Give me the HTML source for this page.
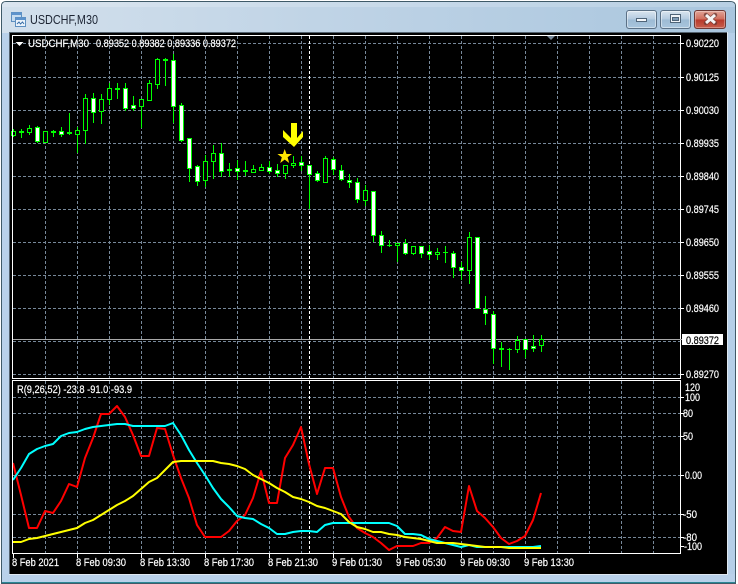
<!DOCTYPE html>
<html><head><meta charset="utf-8"><title>USDCHF,M30</title>
<style>
html,body{margin:0;padding:0;background:#fff;width:738px;height:584px;overflow:hidden}
svg{display:block}
text{font-family:"Liberation Sans",sans-serif;font-size:11px;fill:#fff;stroke:#fff;stroke-width:.2}
.c{shape-rendering:crispEdges}
</style></head><body>
<svg width="738" height="584" viewBox="0 0 738 584" xmlns="http://www.w3.org/2000/svg">
<defs>
<linearGradient id="h" x1="0" x2="1" y1="0" y2="0"><stop offset="0" stop-color="#d3e0ec"/><stop offset=".5" stop-color="#bdd2e5"/><stop offset="1" stop-color="#a9c6de"/></linearGradient>
<linearGradient id="b" x1="0" x2="0" y1="0" y2="1"><stop offset="0" stop-color="#dce6f0"/><stop offset=".48" stop-color="#b4cbe0"/><stop offset=".52" stop-color="#9dbbd4"/><stop offset="1" stop-color="#a9c6de"/></linearGradient>
<linearGradient id="r" x1="0" x2="0" y1="0" y2="1"><stop offset="0" stop-color="#e3a79a"/><stop offset=".48" stop-color="#cf6d5c"/><stop offset=".52" stop-color="#b8392a"/><stop offset="1" stop-color="#c9604e"/></linearGradient>
</defs>
<path d="M1.500 583.500V6Q1.500 1.500 6 1.500H730Q735.500 1.500 735.500 6V583.500Z" fill="#b9d1ea" stroke="#3f5a68"/>
<path d="M2 33V6Q2 2 6 2H730Q735 2 735 6V33Z" fill="url(#h)"/>
<path d="M2 6Q2 2 6 2H730Q735 2 735 6V7H2Z" fill="#fff" opacity=".18"/>
<rect x="2" y="33" width="7" height="541" fill="#b9d1ea"/>
<rect x="728" y="33" width="7" height="541" fill="#b5cfe8"/>
<path class="c" d="M2 582.500H735" stroke="#2b8795"/>
<rect class="c" x="9" y="32" width="719" height="543" fill="#dfe8f1"/>
<rect class="c" x="9" y="32" width="718" height="542" fill="#54626e" />
<rect class="c" x="10" y="33" width="717" height="541" fill="#000"/>

<!-- title -->
<g class="c">
<rect x="11.500" y="12.500" width="10" height="9" fill="#c6dcf0" stroke="#5d8fc0"/>
<rect x="11.500" y="12.500" width="10" height="2.500" fill="#5d93cc"/>
<rect x="15.500" y="17.500" width="10" height="9" fill="#eaf3fb" stroke="#5d8fc0"/>
<rect x="15.500" y="17.500" width="10" height="2.500" fill="#5d93cc"/>
</g>
<path d="M17 24l2-2 1.500 2 2-2 1.500 2" fill="none" stroke="#3a6fa8"/>
<text x="30" y="24" style="font-size:12.500px;fill:#1c2433;stroke:none" textLength="68" lengthAdjust="spacingAndGlyphs">USDCHF,M30</text>

<!-- window buttons -->
<rect x="626.500" y="10.500" width="30" height="18" rx="2.500" fill="url(#b)" stroke="#5b7186"/>
<rect x="660.500" y="10.500" width="30" height="18" rx="2.500" fill="url(#b)" stroke="#5b7186"/>
<rect x="694.500" y="10.500" width="31" height="18" rx="2.500" fill="url(#r)" stroke="#6e3a36"/>
<rect x="627.500" y="11.500" width="28" height="16" rx="2" fill="none" stroke="#fff" opacity=".45"/>
<rect x="661.500" y="11.500" width="28" height="16" rx="2" fill="none" stroke="#fff" opacity=".45"/>
<rect x="695.500" y="11.500" width="29" height="16" rx="2" fill="none" stroke="#fff" opacity=".3"/>
<rect class="c" x="636.500" y="18.500" width="10" height="3" fill="#f4f7fa" stroke="#4f6478"/>
<rect class="c" x="670.500" y="14.500" width="10" height="8" fill="#f0f4f8" stroke="#4f6478"/>
<rect class="c" x="672.500" y="17.500" width="6" height="3" fill="#7f9cb6" stroke="#4f6478"/>
<path d="M706 15l9 8M715 15l-9 8" stroke="#6b3a35" stroke-width="4.500" stroke-linecap="round" opacity=".75"/>
<path d="M706 15l9 8M715 15l-9 8" stroke="#f5f5f5" stroke-width="3"/>

<!-- grid -->
<g class="c" fill="none" stroke="#778899" stroke-dasharray="3 2">
<path d="M13 43.500H680M13 77.500H680M13 110.500H680M13 143.500H680M13 176.500H680M13 209.500H680M13 242.500H680M13 275.500H680M13 308.500H680M13 341.500H680M13 374.500H680"/>
<path d="M13 397.500H680M13 413.500H680M13 436.500H680M13 475.500H680M13 514.500H680M13 537.500H680"/>
<path d="M45.500 36V378M77.500 36V378M109.500 36V378M141.500 36V378M173.500 36V378M205.500 36V378M237.500 36V378M269.500 36V378M301.500 36V378M333.500 36V378M365.500 36V378M397.500 36V378M429.500 36V378M461.500 36V378M493.500 36V378M525.500 36V378M557.500 36V378M589.500 36V378M621.500 36V378M653.500 36V378"/>
<path d="M45.500 381V553M77.500 381V553M109.500 381V553M141.500 381V553M173.500 381V553M205.500 381V553M237.500 381V553M269.500 381V553M301.500 381V553M333.500 381V553M365.500 381V553M397.500 381V553M429.500 381V553M461.500 381V553M493.500 381V553M525.500 381V553M557.500 381V553M589.500 381V553M621.500 381V553M653.500 381V553"/>
</g>
<path class="c" d="M309.500 36V378M309.500 381V553" stroke="#fff" stroke-dasharray="3 2" fill="none"/>
<path class="c" d="M13 339.500H680" stroke="#a8a8a8"/>

<!-- candles -->
<g class="c">
<path fill="none" stroke="#00ff00" d="M13.500 129V137M21.500 129V138M29.500 125V135M37.500 126V143M53.500 130V137M61.500 127V137M69.500 113V135M77.500 127V153M85.500 94V144M93.500 93V123M101.500 94V124M109.500 83V105M117.500 83V99M125.500 83V111M133.500 96V111M141.500 99V128M149.500 80V101M157.500 58V89M165.500 58V86M173.500 54V123M181.500 103V142M189.500 138V182M197.500 165V186M205.500 155V187M213.500 145V179M221.500 143V177M229.500 163V177M237.500 160V180M245.500 161V176M253.500 165V173M261.500 164V171M269.500 161V174M277.500 164V177M285.500 165V179M293.500 156V168M301.500 156V171M309.500 165V209M317.500 171V182M325.500 156V182M333.500 157V175M341.500 165V181M349.500 174V188M357.500 178V203M365.500 185V206M373.500 191V242M381.500 231V253M389.500 240V247M397.500 243V262M405.500 239V255M413.500 246V255M421.500 246V258M429.500 245V260M437.500 248V260M445.500 246V263M453.500 251V278M461.500 262V280M469.500 232V284M485.500 296V325M493.500 311V364M501.500 342V367M509.500 348V370M517.500 336V353M525.500 339V358M533.500 335V352M541.500 335V352"/>
<path fill="#00ff00" d="M19 131h5v2h-5zM51 131h5v2h-5zM67 132h5v2h-5zM115 88h5v2h-5zM163 59h5v2h-5zM227 169h5v2h-5zM243 170h5v2h-5zM387 245h5v1h-5zM443 252h5v1h-5zM499 348h5v2h-5zM507 349h5v1h-5z"/>
<path fill="#000" stroke="#00ff00" d="M11.500 131.500h4v4h-4zM27.500 128.500h4v4h-4zM43.500 131.500h4v11h-4zM75.500 130.500h4v4h-4zM83.500 98.500h4v32h-4zM99.500 99.500h4v12h-4zM107.500 88.500h4v11h-4zM139.500 99.500h4v7h-4zM147.500 83.500h4v17h-4zM155.500 59.500h4v25h-4zM203.500 161.500h4v19h-4zM211.500 153.500h4v8h-4zM251.500 169.500h4v3h-4zM259.500 167.500h4v3h-4zM283.500 165.500h4v8h-4zM291.500 163.500h4v2h-4zM323.500 158.500h4v24h-4zM363.500 190.500h4v10h-4zM395.500 243.500h4v2h-4zM411.500 246.500h4v7h-4zM435.500 252.500h4v2h-4zM467.500 237.500h4v33h-4zM515.500 340.500h4v9h-4zM539.500 339.500h4v6h-4z"/>
<path fill="#fff" stroke="#00ff00" d="M35.500 127.500h4v14h-4zM59.500 131.500h4v3h-4zM91.500 98.500h4v14h-4zM123.500 88.500h4v20h-4zM131.500 105.500h4v3h-4zM171.500 60.500h4v46h-4zM179.500 105.500h4v35h-4zM187.500 138.500h4v30h-4zM195.500 166.500h4v15h-4zM219.500 153.500h4v18h-4zM235.500 168.500h4v3h-4zM267.500 167.500h4v4h-4zM275.500 170.500h4v3h-4zM299.500 162.500h4v3h-4zM307.500 165.500h4v9h-4zM315.500 173.500h4v7h-4zM331.500 159.500h4v10h-4zM339.500 170.500h4v9h-4zM347.500 180.500h4v2h-4zM355.500 182.500h4v17h-4zM371.500 191.500h4v44h-4zM379.500 235.500h4v10h-4zM403.500 243.500h4v10h-4zM419.500 246.500h4v7h-4zM427.500 251.500h4v3h-4zM451.500 253.500h4v14h-4zM459.500 267.500h4v3h-4zM475.500 237.500h4v71h-4zM483.500 309.500h4v4h-4zM491.500 314.500h4v34h-4zM523.500 339.500h4v10h-4zM531.500 346.500h4v2h-4z"/>
</g>

<!-- arrow & star -->
<polygon points="291,123 297,123 297,138 303,131 303,137 294,147 283,137 283,130 291,138" fill="#ffff00"/>
<polygon points="284.700,149 286.500,154 292,154 287.600,157.300 289.200,163 284.700,159.600 280.200,163 281.800,157.300 277.400,154 282.900,154" fill="#ffe600"/>

<!-- indicator lines -->
<g fill="none" stroke-width="2" stroke-linejoin="round">
<polyline stroke="#ff0000" points="13,463 21,495 29,528 37,528 45,511 53,513 61,501 69,484 77,487 85,458 93,438 101,414 109,414 117,406 125,417 133,435 141,456 149,456 157,428 165,429 173,455 181,478 189,498 197,525 205,537 213,537 221,537 229,531 237,521 245,515 253,498 261,471 269,503 277,503 285,458 293,445 301,427 309,464 317,494 325,468 333,468 341,497 349,517 357,528 365,533 373,537 381,543 389,550 397,546 405,546 413,546 421,543 429,543 437,538 445,527 453,531 461,532 469,486 477,511 485,518 493,527 501,538 509,544 517,541 525,536 533,520 541,493"/>
<polyline stroke="#00ffff" points="13,480 21,468 29,454 37,449 45,446 53,444 61,436 69,433 77,432 85,429 93,427 101,426 109,425 117,424 125,424 133,426 141,426 149,426 157,426 165,426 173,423 181,435 189,450 197,463 205,475 213,488 221,499 229,507 237,516 245,518 253,519 261,524 269,528 277,534 285,534 293,532 301,531 309,531 317,532 325,525 333,523 341,523 349,523 357,523 365,523 373,523 381,523 389,523 397,526 405,534 413,534 421,535 429,539 437,541 445,543 453,545 461,547 469,545 477,547 485,547 493,547 501,547 509,547 517,547 525,547 533,547 541,546"/>
<polyline stroke="#ffff00" points="13,542 21,542 29,539 37,538 45,536 53,534 61,532 69,530 77,528 85,523 93,520 101,515 109,510 117,505 125,501 133,496 141,489 149,482 157,478 165,470 173,462 181,461 189,461 197,461 205,461 213,461 221,463 229,464 237,466 245,469 253,475 261,479 269,483 277,488 285,492 293,497 301,499 309,502 317,506 325,508 333,511 341,514 349,522 357,527 365,529 373,532 381,532 389,534 397,535 405,537 413,538 421,539 429,541 437,543 445,543 453,543 461,544 469,545 477,546 485,547 493,547 501,547 509,548 517,548 525,548 533,548 541,548"/>
</g>

<!-- frames -->
<g class="c" fill="none" stroke="#fff">
<rect x="12.500" y="35.500" width="668" height="343"/>
<rect x="12.500" y="380.500" width="668" height="173"/>
<path d="M681 43.500h3M681 77.500h3M681 110.500h3M681 143.500h3M681 176.500h3M681 209.500h3M681 242.500h3M681 275.500h3M681 308.500h3M681 374.500h3"/>
<path d="M681 397.500h3M681 413.500h3M681 436.500h3M681 475.500h3M681 514.500h3M681 537.500h3M681 546.500h3"/>
<path d="M13.500 554v4M77.500 554v4M141.500 554v4M205.500 554v4M269.500 554v4M333.500 554v4M397.500 554v4M461.500 554v4M525.500 554v4"/>
</g>
<polygon points="547,36 555,36 551,40" fill="#778899"/>
<polygon points="15.500,42 23.500,42 19.500,46" fill="#fff"/>

<!-- labels -->
<text x="28" y="47" textLength="61" lengthAdjust="spacingAndGlyphs">USDCHF,M30</text>
<text x="96" y="47" textLength="140" lengthAdjust="spacingAndGlyphs">0.89352 0.89382 0.89336 0.89372</text>
<text x="686" y="47" textLength="33" lengthAdjust="spacingAndGlyphs">0.90220</text>
<text x="686" y="81" textLength="33" lengthAdjust="spacingAndGlyphs">0.90125</text>
<text x="686" y="114" textLength="33" lengthAdjust="spacingAndGlyphs">0.90030</text>
<text x="686" y="147" textLength="33" lengthAdjust="spacingAndGlyphs">0.89935</text>
<text x="686" y="180" textLength="33" lengthAdjust="spacingAndGlyphs">0.89840</text>
<text x="686" y="213" textLength="33" lengthAdjust="spacingAndGlyphs">0.89745</text>
<text x="686" y="246" textLength="33" lengthAdjust="spacingAndGlyphs">0.89650</text>
<text x="686" y="279" textLength="33" lengthAdjust="spacingAndGlyphs">0.89555</text>
<text x="686" y="312" textLength="33" lengthAdjust="spacingAndGlyphs">0.89460</text>
<text x="686" y="378" textLength="33" lengthAdjust="spacingAndGlyphs">0.89270</text>
<rect class="c" x="682" y="334" width="41" height="11" fill="#fff"/>
<path class="c" d="M680 339.500h2" stroke="#a8a8a8"/>
<text x="686" y="344" style="fill:#000;stroke:#000" textLength="33" lengthAdjust="spacingAndGlyphs">0.89372</text>

<text x="17" y="393" textLength="115" lengthAdjust="spacingAndGlyphs">R(9,26,52) -23.8 -91.0 -93.9</text>
<text x="685" y="391" textLength="15" lengthAdjust="spacingAndGlyphs">120</text>
<text x="685" y="401" textLength="15" lengthAdjust="spacingAndGlyphs">100</text>
<text x="683" y="417" textLength="10" lengthAdjust="spacingAndGlyphs">80</text>
<text x="683" y="440" textLength="10" lengthAdjust="spacingAndGlyphs">50</text>
<text x="685" y="479" textLength="17" lengthAdjust="spacingAndGlyphs">0.00</text>
<text x="683" y="518" textLength="14" lengthAdjust="spacingAndGlyphs">-50</text>
<text x="683" y="541" textLength="14" lengthAdjust="spacingAndGlyphs">-80</text>
<text x="684" y="550" textLength="18" lengthAdjust="spacingAndGlyphs">-100</text>

<text x="12" y="566" textLength="47" lengthAdjust="spacingAndGlyphs">8 Feb 2021</text>
<text x="76" y="566" textLength="50" lengthAdjust="spacingAndGlyphs">8 Feb 09:30</text>
<text x="140" y="566" textLength="50" lengthAdjust="spacingAndGlyphs">8 Feb 13:30</text>
<text x="204" y="566" textLength="50" lengthAdjust="spacingAndGlyphs">8 Feb 17:30</text>
<text x="268" y="566" textLength="50" lengthAdjust="spacingAndGlyphs">8 Feb 21:30</text>
<text x="332" y="566" textLength="50" lengthAdjust="spacingAndGlyphs">9 Feb 01:30</text>
<text x="396" y="566" textLength="50" lengthAdjust="spacingAndGlyphs">9 Feb 05:30</text>
<text x="460" y="566" textLength="50" lengthAdjust="spacingAndGlyphs">9 Feb 09:30</text>
<text x="524" y="566" textLength="50" lengthAdjust="spacingAndGlyphs">9 Feb 13:30</text>
</svg>
</body></html>
